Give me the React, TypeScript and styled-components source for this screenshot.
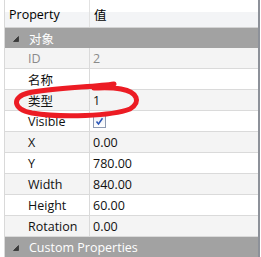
import React from "react";
import styled, { createGlobalStyle } from "styled-components";

const Global = createGlobalStyle`
  html, body { margin: 0; padding: 0; background: #ffffff; }
  body { font-family: "Open Sans", "Noto Sans CJK SC", sans-serif; }
`;

const Panel = styled.div`
  position: relative;
  width: 260px;
  height: 257px;
  box-sizing: border-box;
  padding-left: 4px;
  border-right: 2px solid #8d9199;
  overflow: hidden;
  font-family: "Open Sans", "Noto Sans CJK SC", sans-serif;
  font-size: 12.5px;
`;

const Inner = styled.div`
  display: flex;
  flex-direction: column;
  border-left: 1px solid #d9d9d9;
  height: 100%;
`;

const Header = styled.div`
  display: grid;
  grid-template-columns: 84px 1fr;
  height: 27px;
  border-bottom: 1px solid #d3d3d3;
  background: linear-gradient(#ffffff 0%, #ffffff 45%, #f3f4f6 46%, #f3f4f6 100%);
  color: #000;
`;

const HeaderCell = styled.div<{ $first?: boolean }>`
  display: flex;
  align-items: center;
  padding-left: 4px;
  padding-top: 2px;
  border-left: ${(p) => (p.$first ? "none" : "1px solid #e2e2e2")};
`;

const GroupRow = styled.div`
  display: flex;
  align-items: center;
  height: 20px;
  box-sizing: border-box;
  padding-top: 1px;
  background: #a2a2a2;
  color: #ffffff;
  padding-left: 8px;
  gap: 10px;
`;

const Row = styled.div<{ $alt?: boolean }>`
  display: grid;
  grid-template-columns: 84px 1fr;
  height: 20px;
  border-bottom: 1px solid #dadada;
  background: ${(p) => (p.$alt ? "#f4f4f4" : "#ffffff")};
`;

const NameCell = styled.div<{ $dim?: boolean }>`
  display: flex;
  align-items: center;
  padding-left: 23px;
  padding-top: 1px;
  color: ${(p) => (p.$dim ? "#8a8a8a" : "#111")};
  white-space: nowrap;
`;

const ValueCell = styled.div<{ $dim?: boolean }>`
  display: flex;
  align-items: center;
  padding-left: 3px;
  padding-top: 1px;
  border-left: 1px solid #dadada;
  color: ${(p) => (p.$dim ? "#8a8a8a" : "#111")};
  white-space: nowrap;
`;

const Check = styled.span`
  display: inline-flex;
  align-items: center;
  justify-content: center;
  width: 11px;
  height: 11px;
  border: 1px solid #8e9bb2;
  background: linear-gradient(#e9edf3, #ffffff);
`;

const Overlay = styled.svg`
  position: absolute;
  left: 0;
  top: 0;
  pointer-events: none;
`;

const Arrow = () => (
  <svg width="6" height="6" viewBox="0 0 6 6">
    <polygon points="5.5,0.5 5.5,5.5 0.5,5.5" fill="#3a3a3a" stroke="#222" strokeWidth="0.6" />
  </svg>
);

type Item = { name: string; value?: string; dim?: boolean; check?: boolean };

const items: Item[] = [
  { name: "ID", value: "2", dim: true },
  { name: "名称", value: "" },
  { name: "类型", value: "1" },
  { name: "Visible", check: true },
  { name: "X", value: "0.00" },
  { name: "Y", value: "780.00" },
  { name: "Width", value: "840.00" },
  { name: "Height", value: "60.00" },
  { name: "Rotation", value: "0.00" },
];

export default function App() {
  return (
    <>
      <Global />
      <Panel>
        <Inner>
          <Header>
            <HeaderCell $first>Property</HeaderCell>
            <HeaderCell>值</HeaderCell>
          </Header>
          <GroupRow>
            <Arrow />
            <span>对象</span>
          </GroupRow>
          {items.map((it, i) => (
            <Row key={it.name} $alt={i % 2 === 0}>
              <NameCell $dim={it.dim}>{it.name}</NameCell>
              <ValueCell $dim={it.dim}>
                {it.check ? (
                  <Check>
                    <svg width="9" height="9" viewBox="0 0 9 9">
                      <path d="M1.5 4.5 L3.5 7 L7.5 1.2" fill="none" stroke="#2a56b8" strokeWidth="1.5" />
                    </svg>
                  </Check>
                ) : (
                  it.value
                )}
              </ValueCell>
            </Row>
          ))}
          <GroupRow>
            <Arrow />
            <span>Custom Properties</span>
          </GroupRow>
        </Inner>
        <Overlay width="261" height="257" viewBox="0 0 261 257">
          <path
            d="M114 84 C 95 87, 50 88, 28 93 C 12 97, 12 109, 32 113 C 62 118, 112 116, 130 109 C 141 102, 138 92, 121 89 C 110 87, 100 88, 94 88"
            fill="none"
            stroke="#ec1c24"
            strokeWidth="5"
            strokeLinecap="round"
          />
        </Overlay>
      </Panel>
    </>
  );
}
